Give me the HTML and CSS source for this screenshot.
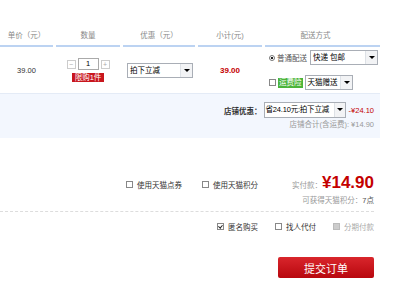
FILE: index.html
```html
<!DOCTYPE html>
<html lang="zh-CN">
<head>
    <meta charset="UTF-8">
    <meta name="viewport" content="width=device-width, initial-scale=1.0">
    <title>确认订单</title>
    <link rel="stylesheet" href="styles.css">
</head>
<body>
    <div class="order">
        <div class="thead">
            <div class="th">单价（元）</div>
            <div class="th">数量</div>
            <div class="th">优惠（元）</div>
            <div class="th">小计(元)</div>
            <div class="th th-ship">配送方式</div>
        </div>

        <div class="item">
            <div class="cell price">39.00</div>
            <div class="cell qty">
                <div class="stepper">
                    <span class="step">−</span>
                    <span class="num">1</span>
                    <span class="step">+</span>
                </div>
                <span class="limit">限购1件</span>
            </div>
            <div class="cell promo">
                <div class="select sel-promo"><span class="sel-text">拍下立减</span><span class="arrow"></span></div>
            </div>
            <div class="cell subtotal">39.00</div>
            <div class="cell ship">
                <div class="ship-row">
                    <span class="radio"></span>
                    <span class="ship-label">普通配送</span>
                    <div class="select sel-express"><span class="sel-text">快递 包邮</span><span class="arrow"></span></div>
                </div>
                <div class="ship-row">
                    <span class="cb"></span>
                    <span class="green">运费险</span>
                    <div class="select sel-ins"><span class="sel-text">天猫赠送</span><span class="arrow"></span></div>
                </div>
            </div>
        </div>

        <div class="shop">
            <div class="shop-row">
                <span class="shop-label">店铺优惠：</span>
                <div class="select sel-shop"><span class="sel-text">省24.10元:拍下立减</span><span class="arrow"></span></div>
                <span class="minus">-¥24.10</span>
            </div>
            <div class="shop-total">店铺合计(含运费): ¥14.90</div>
        </div>

        <div class="pay">
            <div class="pay-row">
                <label class="opt"><span class="cb"></span>使用天猫点券</label>
                <label class="opt opt-points"><span class="cb"></span>使用天猫积分</label>
                <span class="pay-label">实付款：</span>
                <span class="pay-sum">¥14.90</span>
            </div>
            <div class="earn">可获得天猫积分：<b>7点</b></div>
            <div class="divider"></div>
            <div class="extra">
                <label class="opt"><span class="cb checked"></span>匿名购买</label>
                <label class="opt"><span class="cb"></span>找人代付</label>
                <label class="opt disabled"><span class="cb"></span>分期付款</label>
            </div>
            <div class="submit-bar">
                <button type="button" class="submit">提交订单</button>
            </div>
        </div>
    </div>
</body>
</html>
```

FILE: styles.css
```css
body {
    margin: 0;
    padding: 0;
    background: #fff;
    font-family: "Liberation Sans", "Noto Sans CJK SC", sans-serif;
    font-size: 7.5px;
    color: #333;
}

.order {
    width: 380px;
    padding-top: 27px;
}

.thead,
.item {
    display: grid;
    grid-template-columns: 53px 64px 72px 64px 115px;
    column-gap: 3px;
}

.th {
    height: 18px;
    line-height: 18px;
    text-align: center;
    color: #888;
    border-bottom: 2px solid #bcd3f2;
}

.th-ship {
    padding-right: 14px;
}

.item {
    height: 46px;
    align-items: center;
    border-bottom: 1px solid #e4ebf6;
}

.price {
    text-align: center;
    color: #333;
}

.qty {
    display: flex;
    flex-direction: column;
    align-items: center;
    gap: 3px;
}

.stepper {
    display: flex;
    align-items: center;
    gap: 2px;
}

.step {
    width: 7px;
    height: 7px;
    border: 1px solid #ccc;
    color: #aaa;
    font-size: 7px;
    line-height: 7px;
    text-align: center;
}

.num {
    width: 19px;
    height: 10px;
    border: 1px solid #aaa;
    line-height: 10px;
    text-align: center;
    color: #000;
}

.limit {
    background: #c8161d;
    color: #fff;
    height: 9px;
    line-height: 9px;
    padding: 0 3px;
}

.promo {
    padding-left: 4px;
}

.select {
    display: flex;
    align-items: stretch;
    height: 13px;
    border: 1px solid #a9aeb6;
    background: #fff;
    color: #000;
}

.sel-text {
    flex: 1;
    line-height: 13px;
    padding-left: 2px;
    white-space: nowrap;
    overflow: hidden;
}

.arrow {
    width: 11px;
    flex: none;
    border-left: 1px solid #dde1e6;
    background: #f2f3f5;
    position: relative;
}

.arrow::after {
    content: "";
    position: absolute;
    left: 3px;
    top: 5px;
    border-left: 3px solid transparent;
    border-right: 3px solid transparent;
    border-top: 3px solid #000;
}

.sel-promo { width: 64px; }
.sel-express { width: 66px; }
.sel-ins { width: 46px; }

.subtotal {
    text-align: center;
    color: #c40000;
    font-weight: bold;
    font-size: 8px;
}

.ship {
    padding-left: 4px;
    display: flex;
    flex-direction: column;
    gap: 10px;
}

.ship-row {
    display: flex;
    align-items: center;
    gap: 2px;
    color: #555;
}

.ship-label {
    margin-right: 1px;
}

.radio {
    width: 4px;
    height: 4px;
    border: 1px solid #777;
    border-radius: 50%;
    background: radial-gradient(circle, #222 45%, #fff 55%);
}

.cb {
    display: inline-block;
    width: 5px;
    height: 5px;
    border: 1px solid #888;
    background: #fff;
    position: relative;
}

.cb.checked::after {
    content: "";
    position: absolute;
    left: 1px;
    top: 0;
    width: 1.5px;
    height: 3px;
    border-right: 1px solid #222;
    border-bottom: 1px solid #222;
    transform: rotate(40deg);
}

.green {
    background: #4bb43a;
    color: #fff;
    padding: 0 1px;
    line-height: 10px;
}

.shop {
    background: #f3f7fe;
    padding: 8px 6px 7px 0;
}

.shop-row {
    display: flex;
    justify-content: flex-end;
    align-items: center;
    gap: 2px;
    height: 16px;
}

.shop-label {
    font-weight: bold;
    color: #333;
}

.sel-shop {
    width: 80px;
    height: 14px;
}

.sel-shop .sel-text {
    padding-left: 1px;
    letter-spacing: -0.2px;
}

.sel-shop .arrow {
    width: 10px;
}

.sel-shop .arrow::after {
    left: 2px;
}

.minus {
    color: #c40000;
    margin-left: 1px;
}

.shop-total {
    text-align: right;
    color: #999;
    line-height: 13px;
}

.pay {
    width: 374px;
}

.pay-row {
    display: flex;
    justify-content: flex-end;
    align-items: baseline;
    margin-top: 35px;
}

.opt {
    display: inline-flex;
    align-items: center;
    gap: 4px;
    color: #333;
}

.pay-row .opt {
    margin-right: 20px;
}

.pay-row .opt-points {
    margin-right: 34px;
}

.pay-label {
    color: #999;
}

.pay-sum {
    color: #c40000;
    font-size: 17px;
    font-weight: bold;
    line-height: 20px;
}

.earn {
    text-align: right;
    color: #999;
    margin-top: 1px;
}

.earn b {
    font-weight: normal;
    color: #555;
}

.divider {
    border-top: 1px dashed #ddd;
    margin-top: 6px;
}

.extra {
    display: flex;
    justify-content: flex-end;
    gap: 17px;
    margin-top: 9px;
}

.disabled {
    color: #aaa;
}

.disabled .cb {
    background: #ccc;
    border-color: #bbb;
}

.submit-bar {
    display: flex;
    justify-content: flex-end;
    margin-top: 25px;
}

.submit {
    width: 96px;
    height: 21px;
    border: none;
    border-radius: 2px;
    background: linear-gradient(#d9262c, #b8070e);
    color: #fff;
    font-family: "Noto Sans CJK SC", sans-serif;
    font-size: 11px;
    padding: 0;
}
```
